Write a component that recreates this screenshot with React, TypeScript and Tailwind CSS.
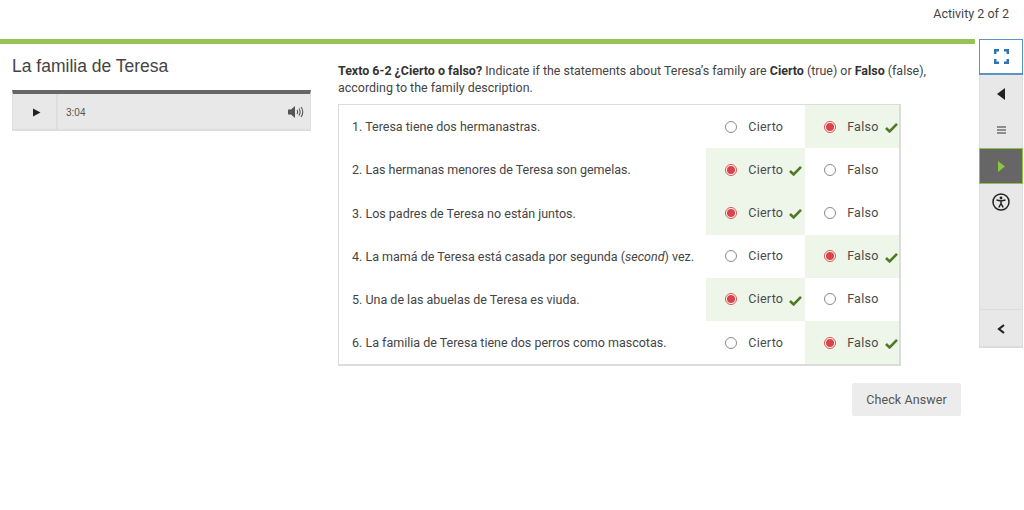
const rows = [
  { text: <>1. Teresa tiene dos hermanastras.</>, answer: "Falso" },
  { text: <>2. Las hermanas menores de Teresa son gemelas.</>, answer: "Cierto" },
  { text: <>3. Los padres de Teresa no están juntos.</>, answer: "Cierto" },
  { text: <>4. La mamá de Teresa está casada por segunda (<em>second</em>) vez.</>, answer: "Falso" },
  { text: <>5. Una de las abuelas de Teresa es viuda.</>, answer: "Cierto" },
  { text: <>6. La familia de Teresa tiene dos perros como mascotas.</>, answer: "Falso" },
];

function Check({ right }: { right: string }) {
  return (
    <svg width="13" height="11" viewBox="0 0 13 11" className={`absolute top-[17px] ${right}`}>
      <path d="M1 6 L4.6 9.4 L12 1.8" fill="none" stroke="#4d7a26" strokeWidth="2.6" />
    </svg>
  );
}

function Option({ label, selected, width, checkRight }: { label: string; selected: boolean; width: string; checkRight: string }) {
  return (
    <div className={`relative flex items-center pl-[19px] ${width} ${selected ? "bg-[#eef6ea]" : ""}`}>
      {selected ? (
        <span className="flex h-[12px] w-[12px] items-center justify-center rounded-full border border-[#d9534f] bg-white">
          <span className="h-[8px] w-[8px] rounded-full bg-[#d9444a]" />
        </span>
      ) : (
        <span className="h-[12px] w-[12px] rounded-full border border-[#8a8a8a] bg-white" />
      )}
      <span className="ml-[11px] mt-[1px] text-[12.5px] tracking-[0.25px] text-[#4a4a4a]">{label}</span>
      {selected && <Check right={checkRight} />}
    </div>
  );
}

export default function App() {
  return (
    <div className="flex h-[510px] w-[1024px] flex-col overflow-hidden bg-white font-['Roboto',sans-serif] text-[#333]">
      <div className="flex h-[39px] items-start justify-end pr-[15px] pt-[5px] text-[12.5px] leading-[17px] text-[#444]">
        Activity 2 of 2
      </div>

      <div className="flex">
        <div className="w-[975px]">
          <div className="h-[5px] bg-[#97c356]" />
          <div className="flex">
            {/* Left column */}
            <div className="ml-[12px] w-[299px]">
              <h1 className="mt-[11px] font-['Liberation_Sans',sans-serif] text-[17.5px] leading-[23px] text-[#444]">
                La familia de Teresa
              </h1>
              <div className="mt-[12px] flex h-[41px] items-center border-x border-t-[4px] border-b-[2px] border-x-[#ddd] border-t-[#666] border-b-[#ddd] bg-[#e8e8e8]">
                <div className="flex h-full w-[45px] items-center justify-center border-r-[2px] border-[#dedede] pl-[3px] pt-[1px]">
                  <svg width="9" height="9" viewBox="0 0 9 9">
                    <path d="M1 0.5 L8.5 4.5 L1 8.5 Z" fill="#222" />
                  </svg>
                </div>
                <span className="ml-[8px] mt-[1px] font-['Liberation_Sans',sans-serif] text-[10px] text-[#555]">3:04</span>
                {/* speaker with three arcs */}
                <svg className="ml-auto mr-[6px] mt-[1px]" width="16" height="14" viewBox="0 0 16 14" fill="none">
                  <path d="M0 4.5H3L7 1V13L3 9.5H0Z" fill="#555" />
                  <path d="M9 5C9.8 6.2 9.8 7.8 9 9M11 3.5C12.4 5.6 12.4 8.4 11 10.5M13 2C15.2 5 15.2 9 13 12" stroke="#555" strokeWidth="1.1" />
                </svg>
              </div>
            </div>

            {/* Question */}
            <div className="ml-[27px] w-[600px]">
              <p className="mt-[18px] text-[12.45px] leading-[17px] text-[#444]">
                <b className="font-bold text-[#333]">Texto 6-2 ¿Cierto o falso?</b> Indicate if the statements about Teresa’s family are <b className="font-bold text-[#333]">Cierto</b> (true) or <b className="font-bold text-[#333]">Falso</b> (false), according to the family description.
              </p>
              <div className="mt-[8px] w-[563px] border border-[#dcdcdc] border-b-2 border-r-2">
                {rows.map((row, i) => (
                  <div key={i} className="flex h-[43.2px]">
                    <div className="flex w-[368px] items-center whitespace-nowrap pl-[13px] pt-[2px] text-[12.5px] text-[#444]">
                      <span>{row.text}</span>
                    </div>
                    <Option label="Cierto" selected={row.answer === "Cierto"} width="w-[99px]" checkRight="right-[3px]" />
                    <Option label="Falso" selected={row.answer === "Falso"} width="w-[94px]" checkRight="right-[1px]" />
                  </div>
                ))}
              </div>
              <div className="flex w-[623px] justify-end">
                <button className="mt-[17px] h-[33px] w-[109px] rounded-[2px] bg-[#ececec] pt-[1px] text-[12.5px] tracking-[0.1px] text-[#555]">
                  Check Answer
                </button>
              </div>
            </div>
          </div>
        </div>

        {/* Sidebar */}
        <div className="ml-[4px] flex h-[309px] w-[44px] flex-col border-x border-b-2 border-[#ddd] bg-[#e8e8e8]">
          <div className="mx-[-1px] flex h-[36px] items-center justify-center border border-b-2 border-[#5b93c7] bg-white">
            <svg width="15" height="15" viewBox="0 0 15 15" fill="none" stroke="#2a76b5" strokeWidth="2.5">
              <path d="M1.2 5V1.2H5M10 1.2H13.8V5M13.8 10V13.8H10M5 13.8H1.2V10" />
            </svg>
          </div>
          <div className="flex h-[37px] items-center justify-center">
            <svg width="8" height="12" viewBox="0 0 8 12"><path d="M8 0V12L0 6Z" fill="#222" /></svg>
          </div>
          <div className="flex h-[36px] items-center justify-center">
            <svg width="9" height="8" viewBox="0 0 9 8" fill="none" stroke="#333" strokeWidth="1.2">
              <path d="M0 1H9M0 4H9M0 7H9" />
            </svg>
          </div>
          <div className="mx-[-1px] flex h-[36px] items-center justify-center border border-[#8fbf4d] bg-[#666]">
            <svg width="7" height="11" viewBox="0 0 7 11"><path d="M0 0L7 5.5L0 11Z" fill="#8cc63f" /></svg>
          </div>
          <div className="flex h-[36px] items-center justify-center">
            <svg width="18" height="18" viewBox="0 0 18 18" fill="none" stroke="#222">
              <circle cx="9" cy="9" r="8" strokeWidth="1.5" />
              <circle cx="9" cy="5" r="1.4" fill="#222" stroke="none" />
              <path d="M4.5 7L9 8L13.5 7M9 8V10.5M9 10.5L6.8 14.5M9 10.5L11.2 14.5" strokeWidth="1.5" />
            </svg>
          </div>
          <div className="mt-auto flex h-[37px] items-center justify-center border-t border-[#ddd] pt-[1px]">
            <svg width="8" height="10" viewBox="0 0 8 10" fill="none" stroke="#222" strokeWidth="2.2">
              <path d="M7 1L2 5L7 9" />
            </svg>
          </div>
        </div>
      </div>
    </div>
  );
}
